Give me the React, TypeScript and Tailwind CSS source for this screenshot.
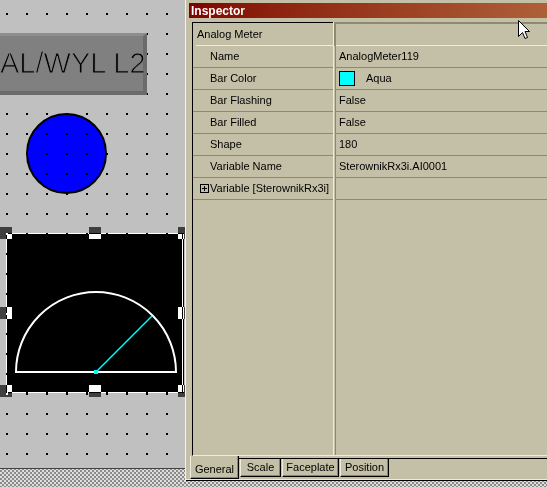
import React from 'react';

const rows: { label: string; value: React.ReactNode }[] = [
  { label: 'Name', value: 'AnalogMeter119' },
  {
    label: 'Bar Color',
    value: (
      <span className="flex items-center">
        <span className="h-[15px] w-[16px] border border-black bg-[#00ffff]" />
        <span className="ml-[11px]">Aqua</span>
      </span>
    ),
  },
  { label: 'Bar Flashing', value: 'False' },
  { label: 'Bar Filled', value: 'False' },
  { label: 'Shape', value: '180' },
  { label: 'Variable Name', value: 'SterownikRx3i.AI0001' },
];

const handles = [
  { l: 'left-[0px]', t: 'top-[227px]' },
  { l: 'left-[89px]', t: 'top-[227px]' },
  { l: 'left-[178px]', t: 'top-[227px]' },
  { l: 'left-[0px]', t: 'top-[307px]' },
  { l: 'left-[178px]', t: 'top-[307px]' },
  { l: 'left-[0px]', t: 'top-[385px]' },
  { l: 'left-[89px]', t: 'top-[385px]' },
  { l: 'left-[178px]', t: 'top-[385px]' },
];

function Canvas() {
  return (
    <div className="relative h-[469px] w-[185px] shrink-0 overflow-hidden border-b border-[#404040] bg-[#c0c0c0] bg-[conic-gradient(from_0deg_at_2px_2px,transparent_75%,#000_0)] bg-[length:20px_20px] bg-[position:6px_13px]">
      {/* label box */}
      <div className="absolute left-[-20px] top-[33px] flex h-[62px] w-[167px] items-center border-t-[3px] border-r-[4px] border-b-[4px] border-t-[#8e8e8e] border-r-[#6b6b6b] border-b-[#6b6b6b] bg-[#808080] pl-[20px]">
        <span className="whitespace-nowrap text-[29px] leading-none text-black [-webkit-text-stroke:1px_#808080]">AL/WYL L2</span>
      </div>

      {/* blue circle */}
      <div className="absolute left-[26px] top-[113px] h-[81px] w-[81px] rounded-full border-2 border-black bg-[#0000ff] bg-[conic-gradient(from_0deg_at_2px_2px,transparent_75%,#000_0)] bg-[length:20px_20px] bg-[position:18px_18px]" />

      {/* analog meter */}
      <div className="absolute left-[6px] top-[233px] h-[160px] w-[178px] bg-black">
        <div className="absolute left-0 top-0 h-px w-full bg-white bg-[conic-gradient(from_0deg_at_2px_2px,transparent_75%,#000_0)] bg-[length:20px_20px]" />
        <div className="absolute bottom-0 left-0 h-px w-full bg-white bg-[conic-gradient(from_0deg_at_2px_2px,transparent_75%,#000_0)] bg-[length:20px_20px]" />
        <div className="absolute left-0 top-0 h-full w-px bg-white bg-[conic-gradient(from_0deg_at_2px_2px,transparent_75%,#000_0)] bg-[length:20px_20px]" />
        <div className="absolute right-[1px] top-0 h-full w-px bg-white" />
        <svg className="absolute left-0 top-0" width="178" height="160" viewBox="0 0 178 160">
          <path d="M10 139 A80 80 0 0 1 170 139 Z" fill="none" stroke="#ffffff" strokeWidth="2" />
          <line x1="90" y1="139" x2="146" y2="83" stroke="#00ffff" strokeWidth="1.5" />
          <rect x="88" y="137" width="4" height="4" fill="#00ffff" />
        </svg>
      </div>

      {handles.map((h, i) => (
        <div key={i} className={`absolute h-[12px] w-[12px] bg-white mix-blend-difference ${h.l} ${h.t}`} />
      ))}
    </div>
  );
}

function Inspector() {
  return (
    <div className="flex h-[481px] w-[362px] shrink-0 flex-col border-l border-[#f4f2ea] bg-[#c4c0a8]">
      <div className="ml-[3px] mt-[3px] flex h-[15px] items-center bg-linear-to-r from-[#800000] to-[#ae6038] pl-[2px] text-[12px] font-bold text-white">
        Inspector
      </div>

      {/* property grid */}
      <div className="ml-[6px] mt-[4px] flex h-[434px] border-b border-l border-b-[#efecdf] border-l-black">
        <div className="flex w-[140px] shrink-0 flex-col">
          <div className="flex h-[23px] items-center border-t border-black pl-[4px]">Analog Meter</div>
          <div className="ml-[3px] h-px bg-[#efecdf]" />
          {rows.map((r) => (
            <div key={r.label} className="flex h-[22px] items-center border-b border-[#878787] pl-[17px]">
              {r.label}
            </div>
          ))}
          <div className="flex h-[22px] items-center border-b border-[#878787] pl-[7px]">
            <span className="relative mr-[1px] h-[9px] w-[9px] border border-black">
              <span className="absolute left-[1px] top-[3px] h-px w-[5px] bg-black" />
              <span className="absolute left-[3px] top-[1px] h-[5px] w-px bg-black" />
            </span>
            <span>Variable [SterownikRx3i]</span>
          </div>
        </div>

        <div className="flex w-[3px] shrink-0 flex-col">
          <div className="flex h-[24px]">
            <div className="w-px bg-[#efecdf]" />
            <div className="w-[2px] bg-[#8d8b6d]" />
          </div>
          <div className="flex flex-1">
            <div className="w-px bg-[#efecdf]" />
            <div className="w-px" />
            <div className="w-px bg-[#878787]" />
          </div>
        </div>

        <div className="flex min-w-0 flex-1 flex-col">
          <div className="h-[24px] border-t-2 border-b border-t-[#8d8b6d] border-b-[#efecdf]" />
          {rows.map((r) => (
            <div key={r.label} className="flex h-[22px] items-center whitespace-nowrap border-b border-[#878787] pl-[3px]">
              {r.value}
            </div>
          ))}
          <div className="h-[22px] border-b border-[#878787]" />
        </div>
      </div>

      {/* tabs */}
      <div className="flex h-[23px]">
        <div className="ml-[4px] flex w-[49px] justify-center border-b border-l border-r border-b-black border-l-[#efecdf] border-r-black pt-[8px] shadow-[inset_-1px_-1px_0_#858585]">
          General
        </div>
        <div className="flex flex-1 flex-col">
          <div className="h-[2px]" />
          <div className="h-px bg-black" />
          <div className="flex gap-px pl-px">
            <div className="flex h-[18px] w-[41px] items-center justify-center border-b border-l border-r border-b-black border-l-[#efecdf] border-r-black shadow-[inset_-1px_-1px_0_#858585]">
              Scale
            </div>
            <div className="flex h-[18px] w-[57px] items-center justify-center border-b border-l border-r border-b-black border-l-[#efecdf] border-r-black shadow-[inset_-1px_-1px_0_#858585]">
              Faceplate
            </div>
            <div className="flex h-[18px] w-[49px] items-center justify-center border-b border-l border-r border-b-black border-l-[#efecdf] border-r-black shadow-[inset_-1px_-1px_0_#858585]">
              Position
            </div>
          </div>
        </div>
      </div>
      <div className="h-px bg-[#efecdf]" />
      <div className="h-px bg-black" />
    </div>
  );
}

export default function App() {
  return (
    <div className="relative flex h-[487px] w-[547px] items-start overflow-hidden bg-[repeating-conic-gradient(#8a8a8a_0_25%,#dedede_0_50%)] bg-[length:4px_4px] font-['Liberation_Sans',Arial,sans-serif] text-[11px] leading-none text-black">
      <Canvas />
      <Inspector />
      <svg className="absolute left-[518px] top-[20px]" width="13" height="21" viewBox="0 0 13 21">
        <path d="M0.5 0.5 V16.5 L4.5 12.5 L7 18.5 L9.5 17.5 L7 11.5 H11.5 Z" fill="#ffffff" stroke="#000000" strokeWidth="1" />
      </svg>
    </div>
  );
}
